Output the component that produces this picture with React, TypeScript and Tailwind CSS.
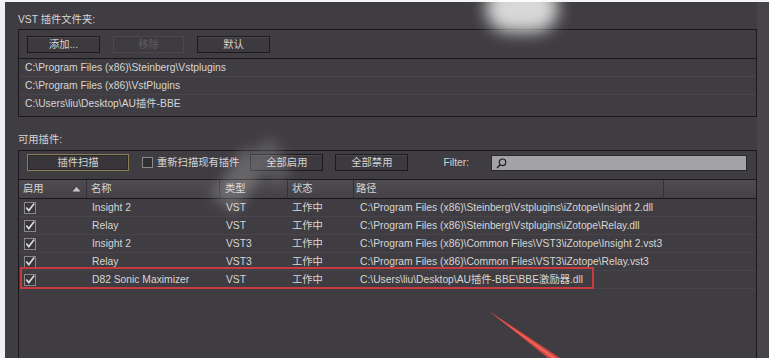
import React from "react";

const Check = () => (
  <svg width="12" height="12" viewBox="0 0 12 12" className="block">
    <rect x="0.5" y="0.5" width="11" height="11" fill="#38363a" stroke="#8a888c" />
    <path d="M2.3 5.6 L4.8 8.6 L10.2 1.6" fill="none" stroke="#dcdcdc" strokeWidth="1.6" />
  </svg>
);

const Btn = ({ w, children, disabled, focus }: { w: string; children: React.ReactNode; disabled?: boolean; focus?: boolean }) => (
  <div
    className={
      "h-[17px] flex items-center justify-center border " +
      w +
      " " +
      (disabled
        ? "border-[#4a484c] text-[#5e5c60] bg-[#3d3b3f]"
        : focus
        ? "border-[#8e7c55] bg-[#38363a] text-[#d4d4d4] shadow-[inset_0_0_0_1px_#29282a]"
        : "border-[#1b1a1c] bg-[#3c3a3e] text-[#d4d4d4] shadow-[inset_0_1px_0_#4c4a4e]")
    }
  >
    {children}
  </div>
);

const rows = [
  ["Insight 2", "VST", "工作中", "C:\\Program Files (x86)\\Steinberg\\Vstplugins\\iZotope\\Insight 2.dll"],
  ["Relay", "VST", "工作中", "C:\\Program Files (x86)\\Steinberg\\Vstplugins\\iZotope\\Relay.dll"],
  ["Insight 2", "VST3", "工作中", "C:\\Program Files (x86)\\Common Files\\VST3\\iZotope\\Insight 2.vst3"],
  ["Relay", "VST3", "工作中", "C:\\Program Files (x86)\\Common Files\\VST3\\iZotope\\Relay.vst3"],
  ["D82 Sonic Maximizer", "VST", "工作中", "C:\\Users\\liu\\Desktop\\AU插件-BBE\\BBE激励器.dll"],
];

export default function App() {
  return (
    <div className="relative w-[769px] h-[358px] overflow-hidden bg-[#3f3d41] text-[#d6d6d6] text-[10.3px] leading-[12px] font-['Liberation_Sans','Noto_Sans_CJK_SC',sans-serif]">
      <div className="h-[2px] bg-[#f4f4f4]" />
      <div className="flex h-[356px]">
        <div className="w-[5px] bg-[#f0f0f0]" />
        <div className="flex-1 flex flex-col pl-[13px] min-w-0">
          <div className="h-[27px] pt-[12px]">VST 插件文件夹:</div>
          <div className="h-[88px] border border-[#19181a] flex flex-col">
            <div className="h-[29px] border-b border-[#19181a] pt-[6px] pl-[8px] flex gap-[13px]">
              <Btn w="w-[73px]">添加...</Btn>
              <Btn w="w-[71px]" disabled>移除</Btn>
              <Btn w="w-[73px]">默认</Btn>
            </div>
            {[
              "C:\\Program Files (x86)\\Steinberg\\Vstplugins",
              "C:\\Program Files (x86)\\VstPlugins",
              "C:\\Users\\liu\\Desktop\\AU插件-BBE",
            ].map((p, i) => (
              <div key={i} className={"h-[18px] flex items-center pl-[6px] " + (i < 2 ? "border-b border-[#48464a]" : "")}>
                {p}
              </div>
            ))}
          </div>
          <div className="h-[33px] pt-[17px]">可用插件:</div>
          <div className="flex-1 border-x border-t border-[#19181a] flex flex-col">
            <div className="h-[29px] border-b border-[#19181a] pt-[3px] pl-[8px] flex items-start">
              <Btn w="w-[102px]" focus>插件扫描</Btn>
              <div className="ml-[13px] mt-[3px] w-[11px] h-[11px] border border-[#8a888c] bg-[#2f2e31]" />
              <div className="ml-[4px] mt-[3px]">重新扫描现有插件</div>
              <div className="ml-[11px]">
                <Btn w="w-[73px]">全部启用</Btn>
              </div>
              <div className="ml-[12px]">
                <Btn w="w-[73px]">全部禁用</Btn>
              </div>
              <div className="ml-[35px] mt-[3px] text-[#d0d0d0]">Filter:</div>
              <div className="ml-[22px] mt-[1px] w-[256px] h-[16px] bg-[#a3a2a5] border border-[#29282b] flex items-center pl-[4px]">
                <svg width="11" height="11" viewBox="0 0 11 11">
                  <circle cx="6.5" cy="4.3" r="3.3" fill="none" stroke="#1e1e1e" strokeWidth="1.2" />
                  <path d="M4.2 6.7 L1 10" stroke="#1e1e1e" strokeWidth="1.5" />
                </svg>
              </div>
            </div>
            <div className="h-[19px] border-b border-[#19181a] bg-[linear-gradient(#4e4c50,#444246)] flex items-center">
              <div className="w-[67px] h-full flex items-center pl-[4px] pr-[5px]">
                <span>启用</span>
                <svg width="9" height="6" viewBox="0 0 9 6" className="ml-auto">
                  <path d="M0.5 5.5 L4.5 1 L8.5 5.5 Z" fill="#c8c8c8" />
                </svg>
              </div>
              <div className="w-[133px] h-full flex items-center pl-[4px] border-l border-[#333135]">名称</div>
              <div className="w-[68px] h-full flex items-center pl-[5px] border-l border-[#333135]">类型</div>
              <div className="w-[66px] h-full flex items-center pl-[4px] border-l border-[#333135]">状态</div>
              <div className="w-[310px] h-full flex items-center pl-[2px] border-l border-[#333135]">路径</div>
              <div className="flex-1 h-full border-l border-[#333135]" />
            </div>
            {rows.map((r, i) => (
              <div key={i} className="h-[18px] flex items-center border-b border-[#47454a]">
                <div className="w-[67px] pl-[5px]">
                  <Check />
                </div>
                <div className="w-[133px] pl-[6px] whitespace-nowrap">{r[0]}</div>
                <div className="w-[68px] pl-[7px]">{r[1]}</div>
                <div className="w-[66px] pl-[5px]">{r[2]}</div>
                <div className="flex-1 pl-[7px] whitespace-nowrap">{r[3]}</div>
              </div>
            ))}
          </div>
        </div>
        <div className="w-[12px] bg-[#47454a]" />
      </div>

      {/* red annotation box */}
      <div className="absolute left-[20px] top-[267px] w-[574px] h-[22px] border-2 border-[#c73a40]" />
      {/* red arrow */}
      <svg className="absolute left-0 top-0" width="769" height="358" viewBox="0 0 769 358">
        <polygon points="489,311 548,358 560,358" fill="#d8453f" />
        <polygon points="491,313 552,358 556,358" fill="#ee6a60" />
      </svg>
      {/* watermark smudges */}
      <div className="absolute left-[486px] top-[-16px] w-[72px] h-[48px] rounded-full bg-white/80 blur-[8px]" />
      <div className="absolute left-[225px] top-[150px] w-[30px] h-[60px] rotate-[35deg] bg-white/20 blur-[6px]" />
      <div className="absolute left-[262px] top-[140px] w-[22px] h-[40px] -rotate-[30deg] bg-white/15 blur-[6px]" />
    </div>
  );
}
